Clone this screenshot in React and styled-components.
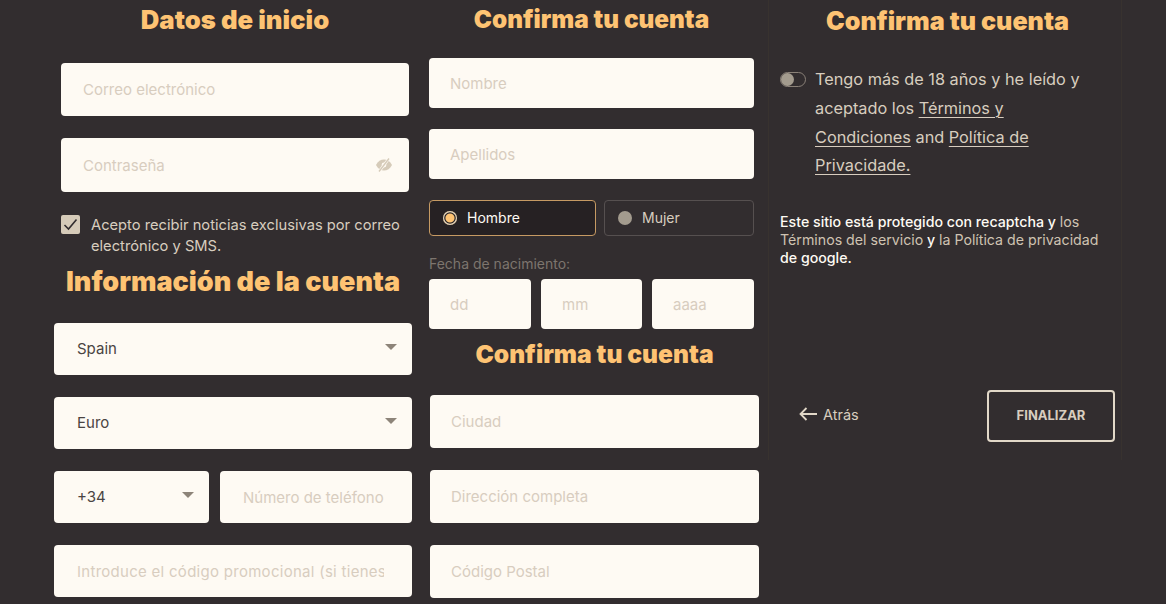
import React from "react";
import styled, { createGlobalStyle } from "styled-components";

const Global = createGlobalStyle`
  html, body { margin: 0; padding: 0; background: #322d2f; }
  * { box-sizing: border-box; }
  body { font-family: "Inter", "Liberation Sans", sans-serif; }
`;

const Page = styled.div`
  width: 1166px;
  height: 604px;
  overflow: hidden;
  display: flex;
  background: #322d2f;
`;
const Column = styled.section`
  width: ${(p) => p.$w}px;
  height: ${(p) => p.$h || 604}px;
  padding-left: ${(p) => p.$left}px;
  border-right: ${(p) => (p.$line ? "1px solid #38322f" : "none")};
  border-left: ${(p) => (p.$line ? "1px solid #38322f" : "none")};
`;
const Block = styled.div`
  width: ${(p) => p.$w}px;
  margin-left: ${(p) => p.$left || 0}px;
`;
const Title = styled.h2`
  margin: 0;
  margin-top: ${(p) => p.$top || 0}px;
  margin-bottom: ${(p) => p.$bottom || 0}px;
  height: 30px;
  line-height: 30px;
  text-align: center;
  color: #fec373;
  font-size: ${(p) => p.$size || 24}px;
  font-weight: 900;
  white-space: nowrap;
`;
const Fields = styled.div`
  display: grid;
  row-gap: ${(p) => p.$gap}px;
`;
const Row = styled.div`
  display: flex;
  gap: ${(p) => p.$gap || 11}px;
  margin-top: ${(p) => p.$top || 0}px;
`;
const Field = styled.div`
  position: relative;
  flex: ${(p) => (p.$w ? `0 0 ${p.$w}px` : 1)};
  height: ${(p) => p.$h}px;
`;
const Input = styled.input`
  width: 100%;
  height: 100%;
  border: 0;
  outline: 0;
  border-radius: 4px;
  background: #fefaf3;
  padding: 0 ${(p) => p.$pr || 21}px 0 ${(p) => p.$pl || 21}px;
  font-family: inherit;
  font-size: 15px;
  letter-spacing: ${(p) => p.$track || 0}px;
  color: #3a3433;
  &::placeholder {
    color: #d8cdbf;
    opacity: 1;
  }
`;
const EyeIcon = styled.svg`
  position: absolute;
  right: 16px;
  top: 50%;
  transform: translateY(-50%);
`;
const Select = styled.div`
  flex: ${(p) => (p.$w ? `0 0 ${p.$w}px` : 1)};
  height: 52px;
  border-radius: 4px;
  background: #fefaf3;
  display: flex;
  align-items: center;
  justify-content: space-between;
  padding: 0 15px 2px 23px;
  font-size: 15px;
  color: #4a4442;
`;
const Caret = styled.span`
  width: 0;
  height: 0;
  border-left: 6px solid transparent;
  border-right: 6px solid transparent;
  border-top: 6px solid #8d8479;
  margin-bottom: 3px;
`;
const Consent = styled.div`
  display: flex;
  gap: 11px;
  margin-top: 23px;
  font-size: 14.7px;
  line-height: 21px;
  color: #d8cdbf;
`;
const Check = styled.span`
  flex: 0 0 19px;
  width: 19px;
  height: 19px;
  border-radius: 2px;
  background: #d6cbb9;
  display: flex;
  align-items: center;
  justify-content: center;
`;
const Radio = styled.div`
  flex: ${(p) => p.$flex};
  height: 36px;
  border-radius: 4px;
  border: 1px solid ${(p) => (p.$on ? "#c69a63" : "#565050")};
  background: ${(p) => (p.$on ? "#262123" : "transparent")};
  display: flex;
  align-items: center;
  gap: 10px;
  padding: 0 0 1px 13px;
  font-size: 14px;
  color: ${(p) => (p.$on ? "#fefaf3" : "#d8cdbf")};
`;
const Dot = styled.span`
  width: 14px;
  height: 14px;
  border-radius: 50%;
  background: ${(p) => (p.$on ? "#fec373" : "#a39b8e")};
  box-shadow: ${(p) => (p.$on ? "inset 0 0 0 1.2px #e8d8bd, inset 0 0 0 2.4px #262123" : "none")};
  flex: 0 0 14px;
`;
const DateLabel = styled.div`
  margin-top: 19px;
  margin-bottom: 7px;
  height: 17px;
  line-height: 17px;
  font-size: 14px;
  color: #7d756e;
`;
const Agree = styled.div`
  display: flex;
  gap: 9px;
  margin-top: 29px;
`;
const Toggle = styled.span`
  flex: 0 0 26px;
  width: 26px;
  height: 15px;
  margin-top: 7px;
  border-radius: 8px;
  border: 1px solid #8a8178;
  display: flex;
  align-items: center;
`;
const Knob = styled.span`
  width: 13px;
  height: 13px;
  border-radius: 50%;
  background: #a39b8e;
`;
const AgreeText = styled.p`
  margin: 0;
  font-size: 16.3px;
  line-height: 28.800px;
  color: #d8cdbf;
`;
const Link = styled.a`
  color: inherit;
  text-decoration: underline;
  text-underline-offset: 3px;
  text-decoration-thickness: 1px;
`;
const Note = styled.p`
  margin: 33px 0 0;
  font-size: 14.200px;
  line-height: 18px;
  font-weight: 500;
  color: #fefaf3;
  white-space: nowrap;
`;
const Muted = styled.span`
  color: #cfc3b2;
  font-weight: 400;
`;
const Actions = styled.div`
  display: flex;
  align-items: center;
  justify-content: space-between;
  margin-top: 123px;
`;
const Back = styled.div`
  display: flex;
  align-items: center;
  gap: 6px;
  margin-left: 19px;
  padding-bottom: 4px;
  font-size: 14.5px;
  color: #d8cdbf;
`;
const Finish = styled.button`
  width: 128px;
  height: 52px;
  border: 2px solid #e2d8c8;
  border-radius: 4px;
  background: transparent;
  color: #d8cdbf;
  padding: 0 0 3px;
  font-family: inherit;
  font-size: 13px;
  font-weight: 700;
`;

function Eye() {
  return (
    <EyeIcon width="18" height="14" viewBox="0 0 18 14">
      <path d="M1 7c2-3.700 4.700-5.500 8-5.500s6 1.800 8 5.500c-2 3.700-4.700 5.500-8 5.500s-6-1.800-8-5.500z" fill="#d6cbb9" />
      <circle cx="9" cy="7" r="2.400" fill="#fefaf3" />
      <path d="M4 13.500 14 .5" stroke="#fefaf3" strokeWidth="2.800" />
      <path d="M4 13.500 14 .5" stroke="#d6cbb9" strokeWidth="1.400" />
    </EyeIcon>
  );
}

export default function App() {
  return (
    <Page>
      <Global />
      <Column $w={418} $left={54}>
        <Block $w={348} $left={7}>
          <Title $top={5} $bottom={28} $size={25.700}>Datos de inicio</Title>
          <Fields $gap={22}>
            <Field $h={53}><Input $pl={22} placeholder="Correo electrónico" /></Field>
            <Field $h={54}>
              <Input $pl={22} placeholder="Contraseña" />
              <Eye />
            </Field>
          </Fields>
          <Consent>
            <Check>
              <svg width="15" height="13" viewBox="0 0 15 13" fill="none">
                <path d="M1.500 7 5.500 11 13.500 1.500" stroke="#322d2f" strokeWidth="1.600" />
              </svg>
            </Check>
            <span>Acepto recibir noticias exclusivas por correo electrónico y SMS.</span>
          </Consent>
        </Block>
        <Block $w={358}>
          <Title $top={10} $bottom={26} $size={27}>Información de la cuenta</Title>
          <Fields $gap={22}>
            <Select>Spain<Caret /></Select>
            <Select>Euro<Caret /></Select>
            <Row>
              <Select $w={155}>+34<Caret /></Select>
              <Field $h={52}><Input $pl={23} $pr={28} placeholder="Número de teléfono" /></Field>
            </Row>
            <Field $h={52}><Input $pl={23} $pr={28} $track={0.28} placeholder="Introduce el código promocional (si tienes uno)" /></Field>
          </Fields>
        </Block>
      </Column>

      <Column $w={350} $left={11}>
        <Block $w={325}>
          <Title $top={4} $bottom={24} $size={24.300}>Confirma tu cuenta</Title>
          <Fields $gap={21}>
            <Field $h={50}><Input placeholder="Nombre" /></Field>
            <Field $h={50}><Input placeholder="Apellidos" /></Field>
          </Fields>
          <Row $gap={8} $top={21}>
            <Radio $on $flex="0 0 167px"><Dot $on />Hombre</Radio>
            <Radio $flex="1"><Dot />Mujer</Radio>
          </Row>
          <DateLabel>Fecha de nacimiento:</DateLabel>
          <Row $gap={10}>
            <Field $h={50} $w={102}><Input placeholder="dd" /></Field>
            <Field $h={50} $w={101}><Input placeholder="mm" /></Field>
            <Field $h={50} $w={102}><Input placeholder="aaaa" /></Field>
          </Row>
        </Block>
        <Block $w={329} $left={1}>
          <Title $top={10} $bottom={26} $size={24.600}>Confirma tu cuenta</Title>
          <Fields $gap={22}>
            <Field $h={53}><Input placeholder="Ciudad" /></Field>
            <Field $h={53}><Input placeholder="Dirección completa" /></Field>
            <Field $h={53}><Input placeholder="Código Postal" /></Field>
          </Fields>
        </Block>
      </Column>

      <Column $w={354} $left={11} $h={460} $line>
        <Block $w={335}>
          <Title $top={6} $size={25.100}>Confirma tu cuenta</Title>
          <Agree>
            <Toggle><Knob /></Toggle>
            <AgreeText>
              Tengo más de 18 años y he leído y<br />
              aceptado los <Link>Términos y<br />Condiciones</Link> and <Link>Política de<br />Privacidade.</Link>
            </AgreeText>
          </Agree>
          <Note>
            Este sitio está protegido con recaptcha y <Muted>los<br />Términos del servicio</Muted> y <Muted>la Política de privacidad</Muted><br />
            de google.
          </Note>
          <Actions>
            <Back>
              <svg width="18" height="14" viewBox="0 0 18 14" fill="none">
                <path d="M18 7H1.500M7.500 1 1.500 7l6 6" stroke="#e2d8c8" strokeWidth="1.800" />
              </svg>
              Atrás
            </Back>
            <Finish>FINALIZAR</Finish>
          </Actions>
        </Block>
      </Column>
    </Page>
  );
}
